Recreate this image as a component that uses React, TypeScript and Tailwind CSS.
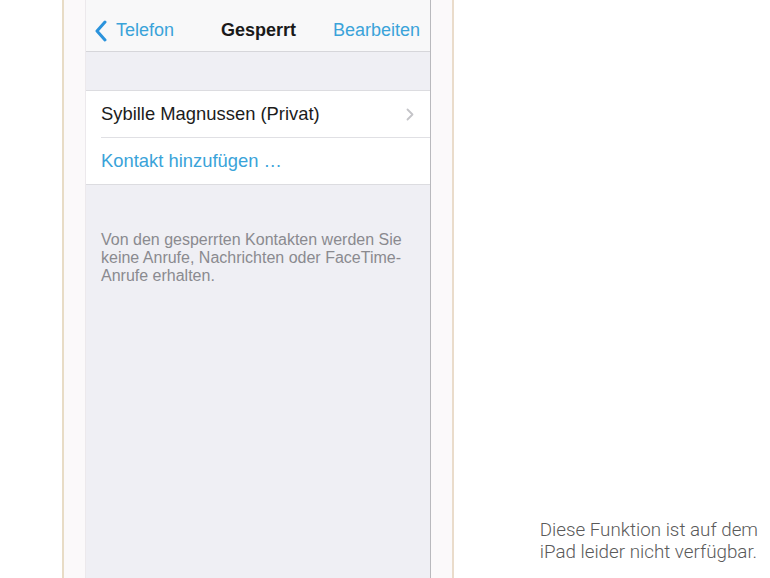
export default function App() {
  return (
    <div className="w-[770px] h-[578px] bg-white flex overflow-hidden font-['Liberation_Sans',Arial,sans-serif]">
      {/* phone frame */}
      <div className="ml-[62px] flex h-full">
        <div className="w-[2px] bg-[#e8dcc6]" />
        <div className="w-[22px] bg-[#fbf9fa] border-r border-[#ece9ec]" />
        <div className="w-[344px] h-full bg-[#efeff4] flex flex-col">
          <div className="h-[52px] pt-[10px] bg-[#f8f8f9] border-b border-[#d6d6da] flex items-center px-[8px] relative">
            <div className="flex items-center gap-[8px] text-[#3aa3d9]">
              <svg width="14" height="22" viewBox="0 0 14 22" fill="none">
                <path d="M11 2 L3 11 L11 20" stroke="#2b93dc" strokeWidth="3" strokeLinecap="round" strokeLinejoin="round" />
              </svg>
              <span className="text-[18px]">Telefon</span>
            </div>
            <span className="absolute left-[135px] top-[17px] text-[18px] font-bold text-[#1a1a1a]">Gesperrt</span>
            <span className="ml-auto text-[18px] text-[#3aa3d9] pr-[2px]">Bearbeiten</span>
          </div>
          <div className="h-[38px]" />
          <div className="bg-white border-y border-[#dcdce0]">
            <div className="h-[46px] flex items-center pl-[15px] pr-[16px] text-[18.4px] text-[#1c1c1c]">
              <span>Sybille Magnussen (Privat)</span>
              <svg className="ml-auto" width="8" height="13" viewBox="0 0 8 13" fill="none">
                <path d="M1.5 1.5 L6.5 6.5 L1.5 11.5" stroke="#c4c4c8" strokeWidth="1.8" strokeLinecap="round" strokeLinejoin="round" />
              </svg>
            </div>
            <div className="ml-[15px] h-px bg-[#e0e0e4]" />
            <div className="h-[46px] flex items-center pl-[15px] text-[18.4px] text-[#3aa3d9]">
              Kontakt hinzufügen …
            </div>
          </div>
          <p className="mt-[46px] pl-[15px] pr-[26px] text-[16px] leading-[18px] text-[#8a8a8f]">
            Von den gesperrten Kontakten werden Sie keine Anrufe, Nachrichten oder FaceTime-Anrufe erhalten.
          </p>
        </div>
        <div className="w-px bg-[#b9b9bd]" />
        <div className="w-[21px] bg-[#fbf9fa]" />
        <div className="w-[2px] bg-[#eadccb]" />
      </div>
      {/* caption */}
      <div className="flex-1 flex flex-col justify-end items-end pr-[12px] pb-[15px]">
        <p className="font-['Roboto',sans-serif] font-light text-[18.8px] leading-[22px] text-[#5a5a5a]">
          Diese Funktion ist auf dem
          <br />
          iPad leider nicht verfügbar.
        </p>
      </div>
    </div>
  );
}
